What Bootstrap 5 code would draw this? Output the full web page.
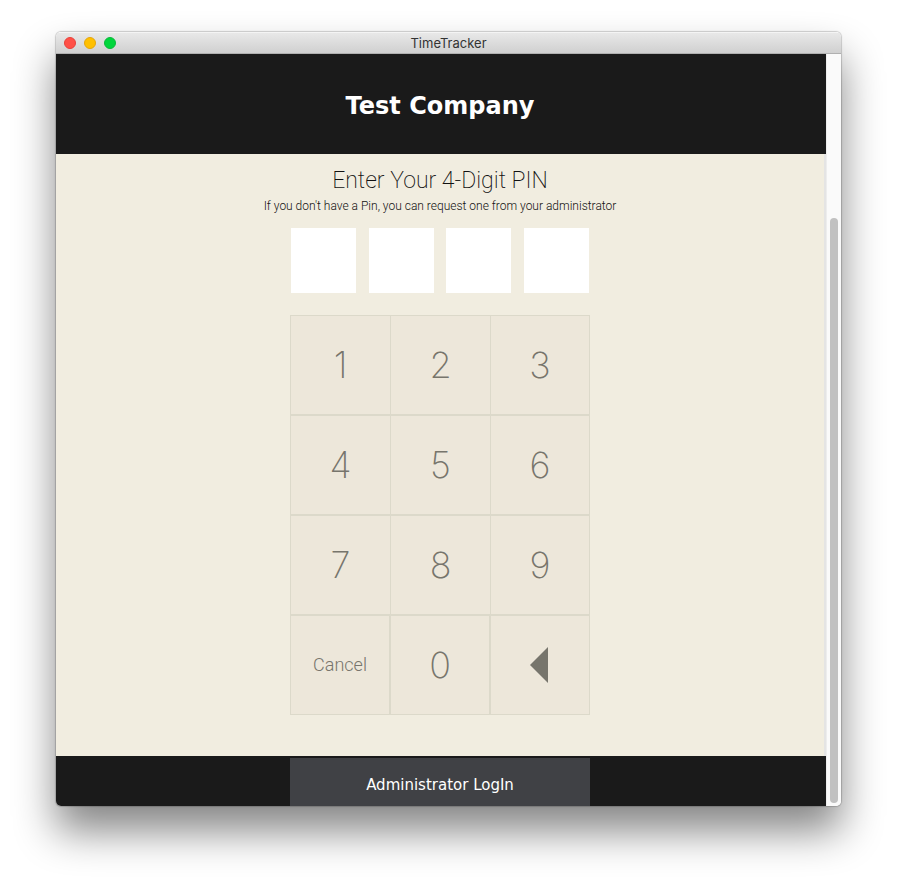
<!DOCTYPE html>
<html lang="en">
<head>
<meta charset="utf-8">
<meta name="viewport" content="width=device-width, initial-scale=1">
<title>TimeTracker</title>
<link href="https://cdn.jsdelivr.net/npm/bootstrap@5.3.0/dist/css/bootstrap.min.css" rel="stylesheet">
<style>
  body { background: #fff; font-family: "Roboto", "Liberation Sans", sans-serif; color: #111; }
  .desktop { padding: 32px 56px 80px; }
  .app-window { border-radius: 5px; box-shadow: 0 0 1px 1px rgba(0,0,0,.18), 0 25px 42px rgba(0,0,0,.48); }
  .app-clip { border-radius: 5px; }
  .title-bar { height: 22px; padding: 0 8px; background: linear-gradient(#e8e8e8, #d0d0d0); border-top: 1px solid #f4f4f4; border-bottom: 1px solid #b0b0b0; }
  .window-title { font: 13px/20px "Inter", sans-serif; color: #333; }
  .light { width: 12px; height: 12px; border: 1px solid; border-radius: 50%; padding: 0; }
  .light-close { background: #ff5047; border-color: #e8413a; }
  .light-min { background: #ffc000; border-color: #e5a50a; }
  .light-zoom { background: #00d63c; border-color: #0ab83a; }
  .bar-side { width: 60px; gap: 8px; }
  .brand-bar { height: 100px; background: #1a1a1a; padding: 4px 2px 0 0; font-family: "DejaVu Sans", sans-serif; }
  .brand-bar h1 { font-size: 24px; line-height: 32px; font-weight: 700; }
  .pin-area { background: #f1ede0; border-right: 2px solid #e4e4e4; padding-top: 12px; }
  .pin-area h2 { font-size: 23px; line-height: 30px; font-weight: 200; }
  .pin-hint { font-size: 12px; line-height: 20px; font-weight: 300; margin-bottom: 12px; }
  .pin-column { width: 300px; }
  .pin-boxes { padding: 0 1px; margin-bottom: 22px; }
  .pin-box { width: 65px; height: 65px; border: 0; background: #fff; text-align: center; font-size: 32px; }
  .keypad .key { height: 100px; border: 1px solid #dcd9ca; background: #ede7da; color: #77756c; font-family: "Inter", sans-serif; font-size: 36px; line-height: 1; font-weight: 200; padding: 0; }
  .keypad .key-cancel { font-family: "Roboto", sans-serif; font-size: 18px; font-weight: 300; }
  .foot-bar { height: 50px; background: #1a1a1a; padding: 2px 2px 0 0; }
  .admin-btn { width: 300px; background: #404145; border: 0; color: #fff; padding: 5px 0 0; font: 15px/20px "DejaVu Sans", sans-serif; }
  .scroll-track { width: 15px; background: #fafafa; border-left: 1px solid #ededed; padding: 164px 3px 3px; }
  .scroll-thumb { width: 8px; border-radius: 4px; background: #c1c1c1; }
</style>
<script src="https://cdn.jsdelivr.net/npm/bootstrap@5.3.0/dist/js/bootstrap.bundle.min.js"></script>
</head>
<body>
<div class="desktop min-vh-100 d-flex">
  <div class="app-window flex-grow-1 d-flex">
    <div class="app-clip flex-grow-1 d-flex flex-column overflow-hidden">
      <header class="title-bar d-flex align-items-center justify-content-between">
        <div class="bar-side d-flex">
          <button type="button" class="light light-close" aria-label="Close"></button>
          <button type="button" class="light light-min" aria-label="Minimize"></button>
          <button type="button" class="light light-zoom" aria-label="Zoom"></button>
        </div>
        <div class="window-title">TimeTracker</div>
        <div class="bar-side"></div>
      </header>
      <div class="flex-grow-1 d-flex">
        <div class="flex-grow-1 d-flex flex-column">
          <div class="brand-bar d-flex align-items-center justify-content-center">
            <h1 class="m-0 text-white">Test Company</h1>
          </div>
          <main class="pin-area flex-grow-1 d-flex flex-column align-items-center text-center">
            <h2 class="m-0">Enter Your 4-Digit PIN</h2>
            <p class="pin-hint">If you don't have a Pin, you can request one from your administrator</p>
            <form class="pin-column">
              <div class="pin-boxes d-flex justify-content-between">
                <input class="pin-box" type="password" maxlength="1" aria-label="Digit 1">
                <input class="pin-box" type="password" maxlength="1" aria-label="Digit 2">
                <input class="pin-box" type="password" maxlength="1" aria-label="Digit 3">
                <input class="pin-box" type="password" maxlength="1" aria-label="Digit 4">
              </div>
              <div class="keypad row g-0">
                <button type="button" class="key col-4 border-end-0">1</button>
                <button type="button" class="key col-4 border-end-0">2</button>
                <button type="button" class="key col-4">3</button>
                <button type="button" class="key col-4 border-end-0">4</button>
                <button type="button" class="key col-4 border-end-0">5</button>
                <button type="button" class="key col-4">6</button>
                <button type="button" class="key col-4 border-end-0">7</button>
                <button type="button" class="key col-4 border-end-0">8</button>
                <button type="button" class="key col-4">9</button>
                <button type="button" class="key key-cancel col-4">Cancel</button>
                <button type="button" class="key col-4">0</button>
                <button type="button" class="key col-4" aria-label="Backspace"><svg class="d-block mx-auto" width="20" height="36" viewBox="0 0 20 36" aria-hidden="true"><path d="M18 0V36L0 18Z" fill="#77756c"/></svg></button>
              </div>
            </form>
          </main>
          <footer class="foot-bar d-flex justify-content-center">
            <button type="button" class="admin-btn">Administrator LogIn</button>
          </footer>
        </div>
        <div class="scroll-track d-flex">
          <div class="scroll-thumb"></div>
        </div>
      </div>
    </div>
  </div>
</div>
</body>
</html>
